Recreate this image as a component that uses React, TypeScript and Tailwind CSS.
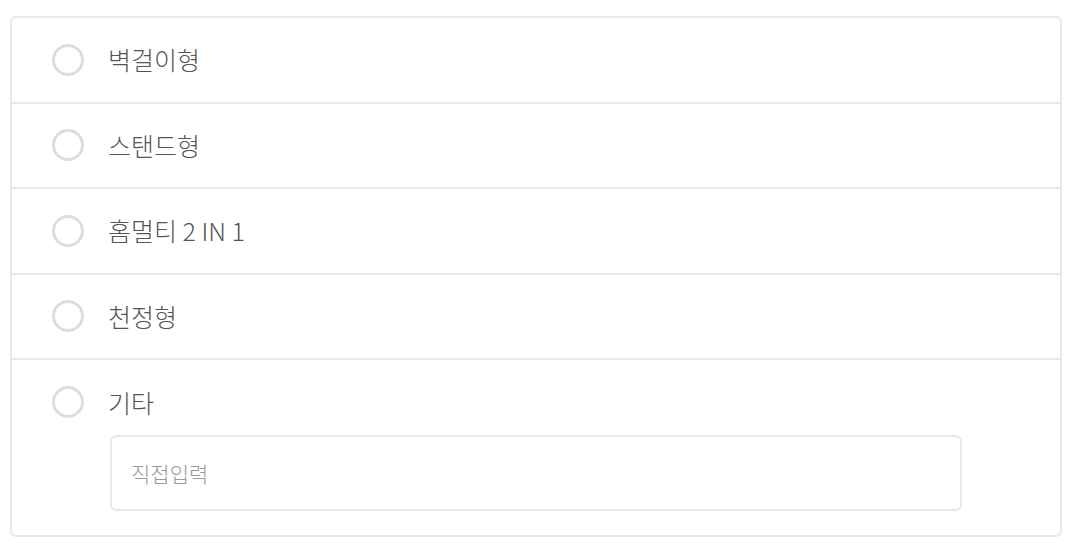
import React from 'react';

const options = ['벽걸이형', '스탠드형', '홈멀티 2 IN 1', '천정형'];

function Radio() {
    return <span className="block w-[32px] h-[32px] shrink-0 rounded-full border-[3px] border-[#dddddd] bg-white" />;
}

export default function App() {
    return (
        <div className="w-[1072px] h-[554px] bg-white pt-[16px] pl-[10px]" style={{ fontFamily: '"Noto Sans CJK KR", "Noto Sans", sans-serif' }}>
            <div className="w-[1052px] border-2 border-[#e8e8e8] rounded-[6px] overflow-hidden">
                {options.map((label) => (
                    <div key={label} className="h-[85.5px] flex items-center pl-[40px] gap-[24px] border-b-2 border-[#e8e8e8]">
                        <Radio />
                        <span className="text-[25px] font-light text-[#555555] leading-none">{label}</span>
                    </div>
                ))}
                <div className="pt-[26px] pb-[24px]">
                    <div className="flex items-center pl-[40px] gap-[24px] h-[32px]">
                        <Radio />
                        <span className="text-[25px] font-light text-[#555555] leading-none">기타</span>
                    </div>
                    <div className="pl-[98px] mt-[17px]">
                        <input
                            type="text"
                            placeholder="직접입력"
                            className="w-[852px] h-[76px] border-2 border-[#e8e8e8] rounded-[6px] px-[19px] text-[21px] font-light text-[#555555] placeholder:text-[#999999] outline-none"
                        />
                    </div>
                </div>
            </div>
        </div>
    );
}
